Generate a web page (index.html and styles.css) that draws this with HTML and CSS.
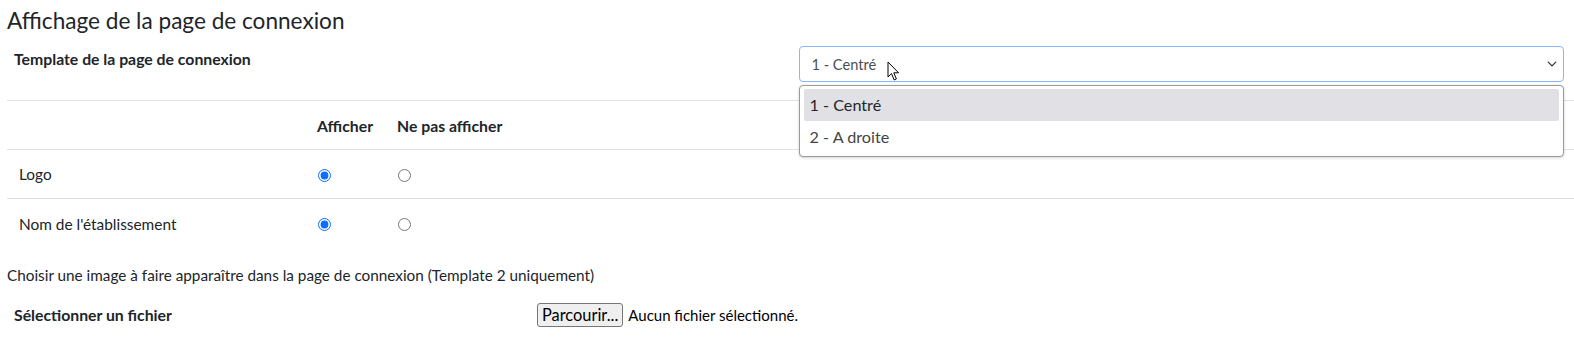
FILE: index.html
```html
<!DOCTYPE html>
<html lang="fr">
<head>
<meta charset="utf-8">
<title>Affichage de la page de connexion</title>
<link rel="stylesheet" href="styles.css">
</head>
<body>
<div class="page">
  <h1 class="title">Affichage de la page de connexion</h1>

  <div class="form-row">
    <div class="col-label half">Template de la page de connexion</div>
    <div class="col-field half">
      <div class="select-wrap">
        <div class="select">
          <span>1 - Centré</span>
          <svg class="chevron" width="10" height="10" viewBox="0 0 16 16"><path d="M2 5l6 6 6-6" fill="none" stroke="#343a40" stroke-width="2.2" stroke-linecap="round" stroke-linejoin="round"/></svg>
        </div>
        <svg class="cursor" width="14" height="21" viewBox="0 0 14 21"><path d="M1 1 L1 16 L4.5 12.6 L7.2 19 L9.4 18 L6.8 11.8 L11.6 11.8 Z" fill="#fff" stroke="#000" stroke-width="1" stroke-linejoin="round"/></svg>
        <ul class="dropdown">
          <li class="option active">1 - Centré</li>
          <li class="option">2 - A droite</li>
        </ul>
      </div>
    </div>
  </div>

  <div class="table">
    <div class="tr head">
      <div class="td c1"></div>
      <div class="td c2">Afficher</div>
      <div class="td c3">Ne pas afficher</div>
    </div>
    <div class="tr">
      <div class="td c1">Logo</div>
      <div class="td c2"><input type="radio" name="logo" checked></div>
      <div class="td c3"><input type="radio" name="logo"></div>
    </div>
    <div class="tr last">
      <div class="td c1">Nom de l'établissement</div>
      <div class="td c2"><input type="radio" name="nom" checked></div>
      <div class="td c3"><input type="radio" name="nom"></div>
    </div>
  </div>

  <p class="hint">Choisir une image à faire apparaître dans la page de connexion (Template 2 uniquement)</p>

  <div class="file-row">
    <div class="col-label third">Sélectionner un fichier</div>
    <div class="file-field">
      <span class="file-btn">Parcourir...</span>
      <span class="file-name">Aucun fichier sélectionné.</span>
    </div>
  </div>
</div>
</body>
</html>
```

FILE: styles.css
```css
* { box-sizing: border-box; }
html, body { margin: 0; padding: 0; background: #fff; }
body {
  font-family: "Source Sans Pro", Lato, "Noto Sans", sans-serif;
  font-size: 15.4px;
  color: #212529;
}
.page { padding-left: 7px; }

.title {
  margin: 0;
  padding-top: 6px;
  font-size: 22.6px;
  line-height: 30px;
  font-weight: 400;
  color: #212529;
}

.form-row {
  display: flex;
  padding-top: 10px;
  padding-bottom: 18px;
}
.half { width: 50%; }
.col-label {
  font-weight: 700;
  font-size: 15.8px;
  line-height: 25px;
  padding-left: 7px;
}
.col-field { padding: 0 10px 0 8px; }

.select-wrap { position: relative; }
.select {
  height: 36px;
  border: 1px solid #86b7fe;
  border-radius: 4px;
  display: flex;
  align-items: center;
  justify-content: space-between;
  padding: 0 6px 0 12px;
  color: #495057;
  font-size: 14.6px;
}
.chevron { display: block; }
.cursor {
  position: absolute;
  left: 88px;
  top: 15px;
}
.dropdown {
  position: absolute;
  left: 0;
  right: 0;
  top: 39px;
  margin: 0;
  padding: 3px 4px;
  list-style: none;
  background: #fff;
  border: 1px solid #9a9a9a;
  border-radius: 4px;
  box-shadow: 0 1px 3px rgba(0,0,0,0.18);
  z-index: 5;
}
.option {
  height: 32px;
  line-height: 32px;
  padding-left: 6px;
  font-size: 16.2px;
  color: #444;
  border-radius: 2px;
}
.option.active { background: #e1e0e5; color: #212529; }

.table { border-top: 1px solid #dee2e6; }
.tr {
  display: flex;
  height: 49px;
  align-items: center;
  border-bottom: 1px solid #dee2e6;
}
.tr.last { border-bottom: none; }
.tr.head .td { font-weight: 700; font-size: 15.8px; }
.td { padding: 0 12px; display: flex; align-items: center; }
.c1 { width: 298px; }
.c2 { width: 80px; }
.c3 { flex: 1; }
input[type="radio"] {
  margin: 2px 0 0 1px;
  width: 13px;
  height: 13px;
  accent-color: #0d6efd;
}

.hint {
  margin: 17px 0 0;
  line-height: 20px;
  font-size: 15.3px;
}

.file-row {
  display: flex;
  align-items: center;
  padding-top: 17px;
}
.third { width: 530px; }
.file-field { display: flex; align-items: center; gap: 5px; }
.file-btn {
  display: inline-block;
  height: 24px;
  line-height: 22px;
  padding: 0 4px;
  border: 1px solid #767676;
  border-radius: 3px;
  background: #efefef;
  font-size: 16.4px;
  color: #000;
}
.file-name { font-size: 15px; color: #000; }
```
